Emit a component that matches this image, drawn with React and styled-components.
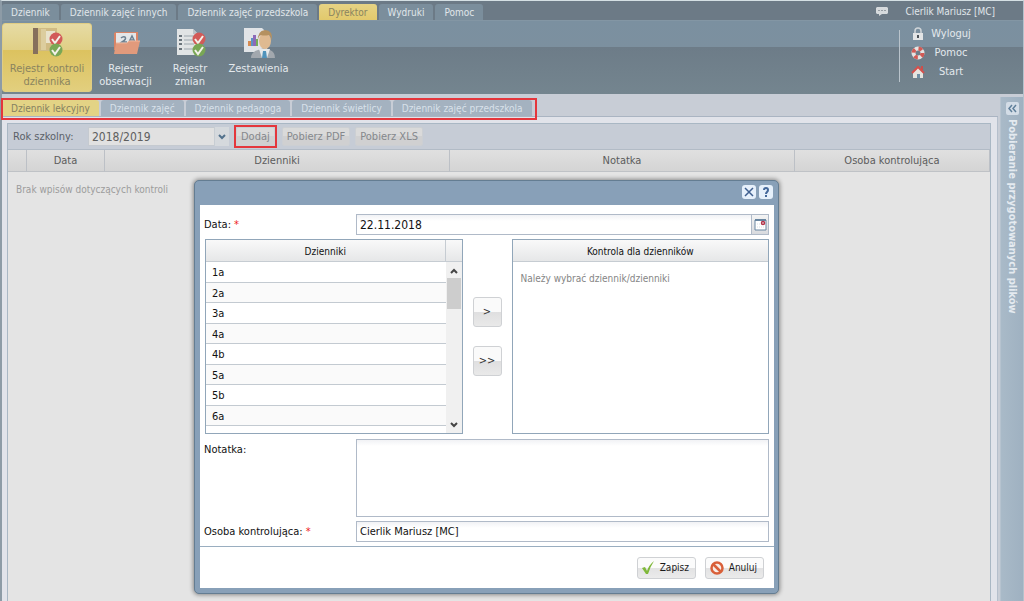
import React from "react";
import styled, { createGlobalStyle, css } from "styled-components";

const Global = createGlobalStyle`
  * { box-sizing: border-box; }
  html, body, #root { height: 100%; }
  body {
    margin: 0;
    overflow: hidden;
    background: #e4e4e4;
    font: 11px/14px "DejaVu Sans Condensed", Tahoma, "DejaVu Sans", sans-serif;
    color: #111;
  }
  button, input, select, textarea { font: inherit; color: inherit; margin: 0; }
  a { color: inherit; text-decoration: none; }
`;

const Page = styled.div`
  position: relative;
  min-height: 100%;
  display: flex;
  flex-direction: column;
  border-top: 1px solid #d5e0e4;
  border-left: 2px solid #8d9ba6;
  border-right: 1px solid #b4c2cc;
`;

const TopBar = styled.header`
  height: 19px;
  display: flex;
  align-items: flex-end;
  justify-content: space-between;
  background: #6c7a86;
  color: #e0e6ea;
  font-size: 10px;
`;

const TabList = styled.nav`
  display: flex;
  gap: 2px;
`;

const MainTab = styled.a`
  height: 16px;
  padding: 0 9px;
  line-height: 17px;
  white-space: nowrap;
  border-radius: 3px 3px 0 0;
  background: ${(p) => (p.$active ? "linear-gradient(#e6d384, #e2c96c)" : "#7b8e9c")};
  color: ${(p) => (p.$active ? "#8a845f" : "#e0e6ea")};
`;

const UserInfo = styled.div`
  display: flex;
  align-items: center;
  gap: 16px;
  height: 17px;
  padding: 0 28px 0 0;
`;

const Ribbon = styled.div`
  height: 74px;
  display: flex;
  justify-content: space-between;
  border-top: 1px solid #8396a4;
  background: linear-gradient(#7b90a0 0, #7c909f 26px, #6d7c88 26px, #74858f 100%);
  color: #e4e9ed;
`;

const RibbonGroup = styled.div`
  display: flex;
  padding-top: 2px;
`;

const RibbonButton = styled.button`
  width: ${(p) => p.$width}px;
  height: 69px;
  padding: 3px 0 0;
  display: flex;
  flex-direction: column;
  align-items: center;
  gap: 3px;
  border: 1px solid transparent;
  border-radius: 3px;
  background: none;
  line-height: 13px;
  color: #e4e9ed;
  ${(p) =>
    p.$active &&
    css`
      background: linear-gradient(#e6dba4 0, #e0cf85 26px, #dcc25f 26px, #e2cf7e 100%);
      border-color: #e0cd84;
      color: #8a845f;
    `}
`;

const QuickLinks = styled.ul`
  list-style: none;
  margin: 9px 0 12px;
  padding: 0 52px 0 11px;
  border-left: 1px solid #b9c3cb;
`;

const QuickLink = styled.li`
  height: 19px;
  margin-top: ${(p) => (p.$first ? "-6px" : "0")};
  a { display: flex; align-items: center; gap: 6px; height: 19px; }
  span { width: 40px; text-align: center; }
`;

const Main = styled.div`
  flex: 1;
  display: flex;
  background: #c8cdd6;
`;

const Content = styled.main`
  flex: 1;
  min-width: 0;
  display: flex;
  flex-direction: column;
`;

const SubTabBar = styled.div`
  height: 23px;
  display: flex;
  align-items: flex-end;
  border-bottom: 1px solid #aab4c2;
`;

const SubTabList = styled.nav`
  position: relative;
  display: flex;
  gap: 2px;
  padding-right: 4px;
  font-size: 10px;
  &::after {
    content: "";
    position: absolute;
    inset: -2px -1px -4px -1px;
    border: 2px solid #e4363c;
  }
`;

const SubTab = styled.a`
  height: 16px;
  line-height: 17px;
  padding: 0 9px;
  white-space: nowrap;
  border-radius: 3px 3px 0 0;
  background: ${(p) => (p.$active ? "#e3d385" : "#a4b2c0")};
  color: ${(p) => (p.$active ? "#858061" : "#d9e1ea")};
`;

const PanelArea = styled.div`
  flex: 1;
  display: flex;
  padding: 6px 6px 0 5px;
  background: #e1e3ea;
  border-right: 1px solid #b5bfcc;
`;

const Panel = styled.section`
  flex: 1;
  border: 1px solid #a9b7c4;
  border-bottom: 0;
  background: #e4e4e4;
`;

const Toolbar = styled.div`
  height: 26px;
  display: flex;
  align-items: center;
  gap: 5px;
  padding-left: 5px;
  background: #c6ccd6;
  border-bottom: 1px solid #b2bbc6;
  color: #5a6068;
  label { width: 70px; }
`;

const YearPicker = styled.div`
  display: flex;
  width: 141px;
  height: 19px;
  position: relative;
  select {
    width: 100%;
    padding: 0 0 0 3px;
    appearance: none;
    border: 1px solid #c5cad0;
    border-radius: 0;
    background: #e1e1e1;
    font-size: 12px;
    line-height: 16px;
    color: #5e5e5e;
  }
  svg {
    position: absolute;
    right: 0;
    top: 0;
    pointer-events: none;
  }
`;

const Highlight = styled.span`
  display: flex;
  border: 2px solid #e4363c;
`;

const ToolButton = styled.button`
  height: 19px;
  padding: 0 4px;
  border: 1px solid #cccfd3;
  border-radius: 2px;
  background: linear-gradient(#dadada 50%, #d0d0d1 50%);
  color: #85888c;
  line-height: 15px;
`;

const Grid = styled.table`
  width: 100%;
  table-layout: fixed;
  border-collapse: separate;
  border-spacing: 0;
  th {
    height: 22px;
    padding: 0;
    font-weight: normal;
    color: #5c5c5c;
    background: linear-gradient(#e0e0e0, #d4d4d4);
    border-bottom: 1px solid #bfc2c6;
    border-right: 1px solid #bcc0c6;
  }
  td { padding: 11px 8px; font-size: 10px; color: #9c9c9c; }
`;

const Rail = styled.aside`
  width: 23px;
  margin: 3px 0 0 2px;
  padding-top: 5px;
  border-left: 1px solid #b6c3cf;
  display: flex;
  flex-direction: column;
  align-items: center;
  gap: 4px;
  background: linear-gradient(90deg, #a9bac8, #9fb1c1);
  h2 {
    margin: 0;
    writing-mode: vertical-rl;
    font-size: 11px;
    line-height: 14px;
    color: #e4eaf0;
    white-space: nowrap;
  }
`;

const RailToggle = styled.button`
  width: 13px;
  height: 13px;
  padding: 0;
  border: 0;
  border-radius: 2px;
  display: flex;
  background: #d3dde7;
`;

const Dialog = styled.div`
  position: absolute;
  left: 192px;
  top: 179px;
  width: 585px;
  padding: 0 4px 5px 5px;
  border: 1px solid #647d92;
  border-radius: 5px;
  background: #88a0b8;
  box-shadow: 0 0 4px 1px rgba(0, 0, 0, 0.4);
`;

const DialogTitle = styled.div`
  height: 24px;
  display: flex;
  justify-content: flex-end;
  align-items: center;
  gap: 3px;
  padding: 0 1px 2px 0;
`;

const TitleButton = styled.button`
  width: 14px;
  height: 14px;
  padding: 0;
  border: 0;
  border-radius: 3px;
  display: flex;
  background: #e6f0fb;
`;

const Form = styled.form`
  background: #fff;
`;

const Fields = styled.div`
  display: flex;
  flex-direction: column;
  gap: 4px;
  padding: 9px 5px 4px 4px;
  border-bottom: 1px solid #9aaec0;
`;

const Field = styled.div`
  display: grid;
  grid-template-columns: 152px 1fr;
  label { padding-top: 4px; }
`;

const Required = styled.span`
  color: #e22;
`;

const inputLook = css`
  width: 100%;
  min-width: 0;
  border: 1px solid #b0bac8;
  border-radius: 0;
  background: linear-gradient(#f1f2f5, #fff 6px);
  outline: 0;
`;

const TextInput = styled.input`
  ${inputLook}
  height: 21px;
  padding: 0 3px;
  font-size: ${(p) => (p.$compact ? 11 : 12)}px;
`;

const TextArea = styled.textarea`
  ${inputLook}
  display: block;
  height: 78px;
  resize: none;
`;

const DateBox = styled.div`
  display: flex;
`;

const DateButton = styled.button`
  width: 18px;
  height: 21px;
  margin-left: -1px;
  padding: 0;
  flex: none;
  display: flex;
  align-items: center;
  justify-content: center;
  border: 1px solid #b0bac8;
  background: linear-gradient(#f4f4f4, #d8dade);
`;

const Transfer = styled.div`
  display: grid;
  grid-template-columns: 1fr 49px 1fr;
  margin: 0 0 1px 1px;
`;

const ListBox = styled.section`
  height: 195px;
  overflow: hidden;
  border: 1px solid #91a6b9;
  h3 {
    margin: 0;
    height: 22px;
    line-height: 23px;
    font-size: 10px;
    font-weight: normal;
    text-align: center;
    border-bottom: 1px solid #c6ccd2;
    background: linear-gradient(#f9f9f9, #e6e7e8);
  }
  p { margin: 10px 8px; font-size: 10px; color: #858585; }
`;

const ListHead = styled.div`
  display: flex;
  h3 { flex: 1; border-right: 1px solid #c6ccd2; }
  &::after {
    content: "";
    width: 16px;
    border-bottom: 1px solid #c6ccd2;
    background: linear-gradient(#f9f9f9, #e6e7e8);
  }
`;

const ListScroll = styled.div`
  display: flex;
  justify-content: space-between;
  height: 171px;
  ul { flex: 1; margin: 0; padding: 0; list-style: none; }
`;

const ListRow = styled.li`
  height: 21px;
  line-height: 21px;
  padding-left: 6px;
  border-bottom: 1px solid #c3cad1;
  &:nth-child(even) { height: 20px; background: #fafafa; }
`;

const ScrollTrack = styled.div`
  width: 16px;
  padding: 0 1px;
  display: flex;
  flex-direction: column;
  background: #f0f0f0;
  i { flex: 1; }
`;

const ScrollThumb = styled.div`
  height: 31px;
  background: #cdcdcd;
`;

const Arrows = styled.div`
  display: flex;
  flex-direction: column;
  align-items: center;
  gap: 19px;
  padding-top: 58px;
`;

const ArrowButton = styled.button`
  width: 29px;
  height: 30px;
  padding: 0;
  border: 1px solid #cfd1d4;
  border-radius: 3px;
  background: linear-gradient(#fafafa 50%, #dfdfe0 50%, #e9e9e9);
  color: #333;
`;

const Footer = styled.div`
  height: 41px;
  display: flex;
  justify-content: flex-end;
  align-items: center;
  gap: 9px;
  padding: 1px 10px 0 0;
`;

const ActionButton = styled.button`
  width: 59px;
  height: 22px;
  padding: 0 6px 0 3px;
  display: flex;
  align-items: center;
  justify-content: space-between;
  border: 1px solid #cfd1d4;
  border-radius: 3px;
  background: linear-gradient(#fbfbfb 50%, #e2e2e3 50%, #ebebeb);
  color: #1a1a1a;
  font-size: 10px;
`;

const Tick = ({ x, y, color }) => (
  <g>
    <circle cx={x} cy={y} r="6.500" fill={color} />
    <path d={`M${x - 4} ${y} l3 4 l5 -7`} fill="none" stroke="#f4f1ea" strokeWidth="2" />
  </g>
);

const RegisterIcon = () => (
  <svg width="32" height="32" viewBox="0 0 32 32">
    <path d="M2 1h5v26H2z" fill="#86705c" />
    <path d="M7 1h19v23H7z" fill="#d0bb84" />
    <path d="M10 2h5v21h-5z" fill="#dccd9e" />
    <path d="M15 4h9v12h-9z" fill="#e9e3cc" />
    <Tick x={25} y={12} color="#d25a58" />
    <Tick x={25} y={23} color="#79a755" />
  </svg>
);

const FolderIcon = () => (
  <svg width="32" height="32" viewBox="0 0 32 32">
    <path d="M4 6l2-1h22v18H4z" fill="#d98466" />
    <path d="M6 6h20v15H6z" fill="#e3e6e8" />
    <path d="M11 11q2-2 4-1q2 2-3 5h5M19 15l3-6l3 6M20 13h4" fill="none" stroke="#6d8191" strokeWidth="1.500" />
    <path d="M4 27l2-11h11l2-2h11l-3 13z" fill="#e19a7c" />
    <path d="M6 16h11l2-2h11" fill="none" stroke="#edb69c" />
  </svg>
);

const ChangesIcon = () => (
  <svg width="32" height="32" viewBox="0 0 32 32">
    <path d="M3 2h16l5 5v21H3z" fill="#e1e4e5" />
    <path d="M19 2l5 5h-5z" fill="#bcc4c9" />
    <path d="M5 9h3M5 13h3M5 17h3M5 22h3" stroke="#6a747b" strokeWidth="2" />
    <path d="M10 9h10M10 13h10M10 17h10M10 22h10" stroke="#9ca6ad" />
    <Tick x={25} y={12} color="#d25a58" />
    <Tick x={25} y={23} color="#79a755" />
  </svg>
);

const ReportIcon = () => (
  <svg width="32" height="32" viewBox="0 0 32 32">
    <path d="M1 1h18l5 5v19H1z" fill="#e1e4e7" />
    <path d="M5 14h3v5H5z" fill="#d58a50" />
    <path d="M8 11h2v8H8z" fill="#5d93c4" />
    <path d="M10 8h3v11h-3z" fill="#8d6ab8" />
    <path d="M13 12h2v7h-2z" fill="#75ae58" />
    <path d="M8 31q0-6 7-8l6-2l6 2q5 2 5 8z" fill="#a2a8ae" />
    <path d="M16 22l3 9h5l3-9z" fill="#e6e9ea" />
    <path d="M20 24h3l1 7h-5z" fill="#4f93bb" />
    <ellipse cx="22" cy="14" rx="6" ry="8" fill="#dfba91" />
    <path d="M15 14q-1-10 7-11q8 0 7 11q-1-5-3-6q-5 1-8 0q-3 1-3 6z" fill="#b59160" />
  </svg>
);

const ChatIcon = () => (
  <svg width="14" height="11" viewBox="0 0 14 11">
    <path d="M2 1h10l1 1v5l-1 1H7l-3 2V8H2L1 7V2z" fill="#d6dadd" />
    <path d="M3 4.500h8" stroke="#969da3" strokeDasharray="2 1" />
  </svg>
);

const LockIcon = () => (
  <svg width="14" height="14" viewBox="0 0 14 14">
    <path d="M4 7V4q0-3 3-3t3 3v3" fill="none" stroke="#cfd4d8" strokeWidth="1.500" />
    <path d="M2 6h10v7H2z" fill="#e2e4e5" />
    <path d="M7 8v3" stroke="#4b5157" strokeWidth="2" />
  </svg>
);

const RingIcon = () => (
  <svg width="14" height="14" viewBox="0 0 14 14">
    <circle cx="7" cy="7" r="4.500" fill="none" stroke="#e5e3e2" strokeWidth="4" />
    <circle cx="7" cy="7" r="4.500" fill="none" stroke="#d25a55" strokeWidth="4" strokeDasharray="3.530 3.530" />
  </svg>
);

const HomeIcon = () => (
  <svg width="14" height="14" viewBox="0 0 14 14">
    <path d="M2 7l5-5l5 5v6H2z" fill="#e6e4df" />
    <path d="M10 1h2v4h-2z" fill="#c9504c" />
    <path d="M1 8l6-6l6 6" fill="none" stroke="#d4504d" strokeWidth="2" />
    <path d="M6 9h3v4H6z" fill="#6f8ea5" />
  </svg>
);

const Chevron = ({ up }) => (
  <svg width="14" height="16" viewBox="0 0 14 16">
    <path d={up ? "M4 11l3-3l3 3" : "M4 6l3 3l3-3"} fill="none" stroke="#444" strokeWidth="2" />
  </svg>
);

const SelectArrow = () => (
  <svg width="15" height="19" viewBox="0 0 15 19">
    <path d="M0 0h15v19H0z" fill="#d5d9dd" />
    <path d="M0 0v19" stroke="#b9c2ca" />
    <path d="M5 8l3 3l3-3" fill="none" stroke="#52718c" strokeWidth="2" />
  </svg>
);

const CollapseIcon = () => (
  <svg width="13" height="13" viewBox="0 0 13 13">
    <path d="M6 3L3 6.500L6 10M10 3L7 6.500L10 10" fill="none" stroke="#5f7f9a" strokeWidth="1.500" />
  </svg>
);

const CloseIcon = () => (
  <svg width="14" height="14" viewBox="0 0 14 14">
    <path d="M3 3l8 8M11 3l-8 8" stroke="#3f5f8f" strokeWidth="1.500" />
  </svg>
);

const HelpIcon = () => (
  <svg width="14" height="14" viewBox="0 0 14 14">
    <path d="M5 5q0-2 2-2t2 2q0 1-1 2T7 9" fill="none" stroke="#44689a" strokeWidth="2" />
    <path d="M6 10h2v2H6z" fill="#44689a" />
  </svg>
);

const CalendarIcon = () => (
  <svg width="13" height="13" viewBox="0 0 13 13">
    <path d="M1 2h11v10H1z" fill="#fff" stroke="#6885a0" />
    <path d="M1 2h11" stroke="#6885a0" strokeWidth="2" />
    <path d="M3 6h5M3 9h7" stroke="#d8dde3" strokeDasharray="1 1" />
    <circle cx="9" cy="5" r="1.500" fill="#fff" stroke="#b3344a" strokeWidth="1.500" />
  </svg>
);

const SaveIcon = () => (
  <svg width="16" height="16" viewBox="0 0 16 16">
    <path d="M1 8l3-1l2 4q2-6 7-10q-4 6-6 13H5z" fill="#7fb83a" />
  </svg>
);

const CancelIcon = () => (
  <svg width="16" height="16" viewBox="0 0 16 16">
    <circle cx="8" cy="8" r="5.500" fill="#f8eee8" stroke="#d9603a" strokeWidth="2.500" />
    <path d="M4 4l8 8" stroke="#d9603a" strokeWidth="2.500" />
  </svg>
);

const mainTabs = ["Dziennik", "Dziennik zajęć innych", "Dziennik zajęć przedszkola", "Dyrektor", "Wydruki", "Pomoc"];
const subTabs = ["Dziennik lekcyjny", "Dziennik zajęć", "Dziennik pedagoga", "Dziennik świetlicy", "Dziennik zajęć przedszkola"];
const journals = ["1a", "2a", "3a", "4a", "4b", "5a", "5b", "6a"];
const ribbonItems = [
  { icon: RegisterIcon, lines: ["Rejestr kontroli", "dziennika"], width: 90, active: true },
  { icon: FolderIcon, lines: ["Rejestr", "obserwacji"], width: 67 },
  { icon: ChangesIcon, lines: ["Rejestr", "zmian"], width: 62 },
  { icon: ReportIcon, lines: ["Zestawienia"], width: 75 },
];
const quickLinks = [
  { icon: LockIcon, text: "Wyloguj" },
  { icon: RingIcon, text: "Pomoc" },
  { icon: HomeIcon, text: "Start" },
];

export default function App() {
  return (
    <>
      <Global />
      <Page>
        <TopBar>
          <TabList>
            {mainTabs.map((t) => (
              <MainTab key={t} href="#" $active={t === "Dyrektor"}>{t}</MainTab>
            ))}
          </TabList>
          <UserInfo><ChatIcon /><span>Cierlik Mariusz [MC]</span></UserInfo>
        </TopBar>
        <Ribbon>
          <RibbonGroup>
            {ribbonItems.map(({ icon: Icon, lines, width, active }) => (
              <RibbonButton key={lines.join()} $width={width} $active={active}>
                <Icon />
                <span>{lines.map((l, i) => <React.Fragment key={l}>{i > 0 && <br />}{l}</React.Fragment>)}</span>
              </RibbonButton>
            ))}
          </RibbonGroup>
          <QuickLinks>
            {quickLinks.map(({ icon: Icon, text }, i) => (
              <QuickLink key={text} $first={i === 0}>
                <a href="#"><Icon /><span>{text}</span></a>
              </QuickLink>
            ))}
          </QuickLinks>
        </Ribbon>
        <Main>
          <Content>
            <SubTabBar>
              <SubTabList>
                {subTabs.map((t, i) => <SubTab key={t} href="#" $active={i === 0}>{t}</SubTab>)}
              </SubTabList>
            </SubTabBar>
            <PanelArea>
              <Panel>
                <Toolbar>
                  <label htmlFor="year">Rok szkolny:</label>
                  <YearPicker>
                    <select id="year"><option>2018/2019</option></select>
                    <SelectArrow />
                  </YearPicker>
                  <Highlight><ToolButton>Dodaj</ToolButton></Highlight>
                  <ToolButton>Pobierz PDF</ToolButton>
                  <ToolButton>Pobierz XLS</ToolButton>
                </Toolbar>
                <Grid>
                  <colgroup>
                    <col width="19" /><col width="78" /><col /><col /><col width="195" />
                  </colgroup>
                  <thead>
                    <tr><th /><th>Data</th><th>Dzienniki</th><th>Notatka</th><th>Osoba kontrolująca</th></tr>
                  </thead>
                  <tbody>
                    <tr><td colSpan="5">Brak wpisów dotyczących kontroli</td></tr>
                  </tbody>
                </Grid>
              </Panel>
            </PanelArea>
          </Content>
          <Rail>
            <RailToggle aria-label="Rozwiń"><CollapseIcon /></RailToggle>
            <h2>Pobieranie przygotowanych plików</h2>
          </Rail>
        </Main>
        <Dialog role="dialog">
          <DialogTitle>
            <TitleButton aria-label="Zamknij"><CloseIcon /></TitleButton>
            <TitleButton aria-label="Pomoc"><HelpIcon /></TitleButton>
          </DialogTitle>
          <Form onSubmit={(e) => e.preventDefault()}>
            <Fields>
              <Field>
                <label htmlFor="date">Data: <Required>*</Required></label>
                <DateBox>
                  <TextInput id="date" defaultValue="22.11.2018" />
                  <DateButton type="button" aria-label="Kalendarz"><CalendarIcon /></DateButton>
                </DateBox>
              </Field>
              <Transfer>
                <ListBox>
                  <ListHead><h3>Dzienniki</h3></ListHead>
                  <ListScroll>
                    <ul>{journals.map((j) => <ListRow key={j}>{j}</ListRow>)}</ul>
                    <ScrollTrack>
                      <Chevron up />
                      <ScrollThumb />
                      <i />
                      <Chevron />
                    </ScrollTrack>
                  </ListScroll>
                </ListBox>
                <Arrows>
                  <ArrowButton type="button">&gt;</ArrowButton>
                  <ArrowButton type="button">&gt;&gt;</ArrowButton>
                </Arrows>
                <ListBox>
                  <h3>Kontrola dla dzienników</h3>
                  <p>Należy wybrać dziennik/dzienniki</p>
                </ListBox>
              </Transfer>
              <Field>
                <label htmlFor="note">Notatka:</label>
                <TextArea id="note" />
              </Field>
              <Field>
                <label htmlFor="person">Osoba kontrolująca: <Required>*</Required></label>
                <TextInput id="person" $compact defaultValue="Cierlik Mariusz [MC]" />
              </Field>
            </Fields>
            <Footer>
              <ActionButton type="submit"><SaveIcon />Zapisz</ActionButton>
              <ActionButton type="button"><CancelIcon />Anuluj</ActionButton>
            </Footer>
          </Form>
        </Dialog>
      </Page>
    </>
  );
}
